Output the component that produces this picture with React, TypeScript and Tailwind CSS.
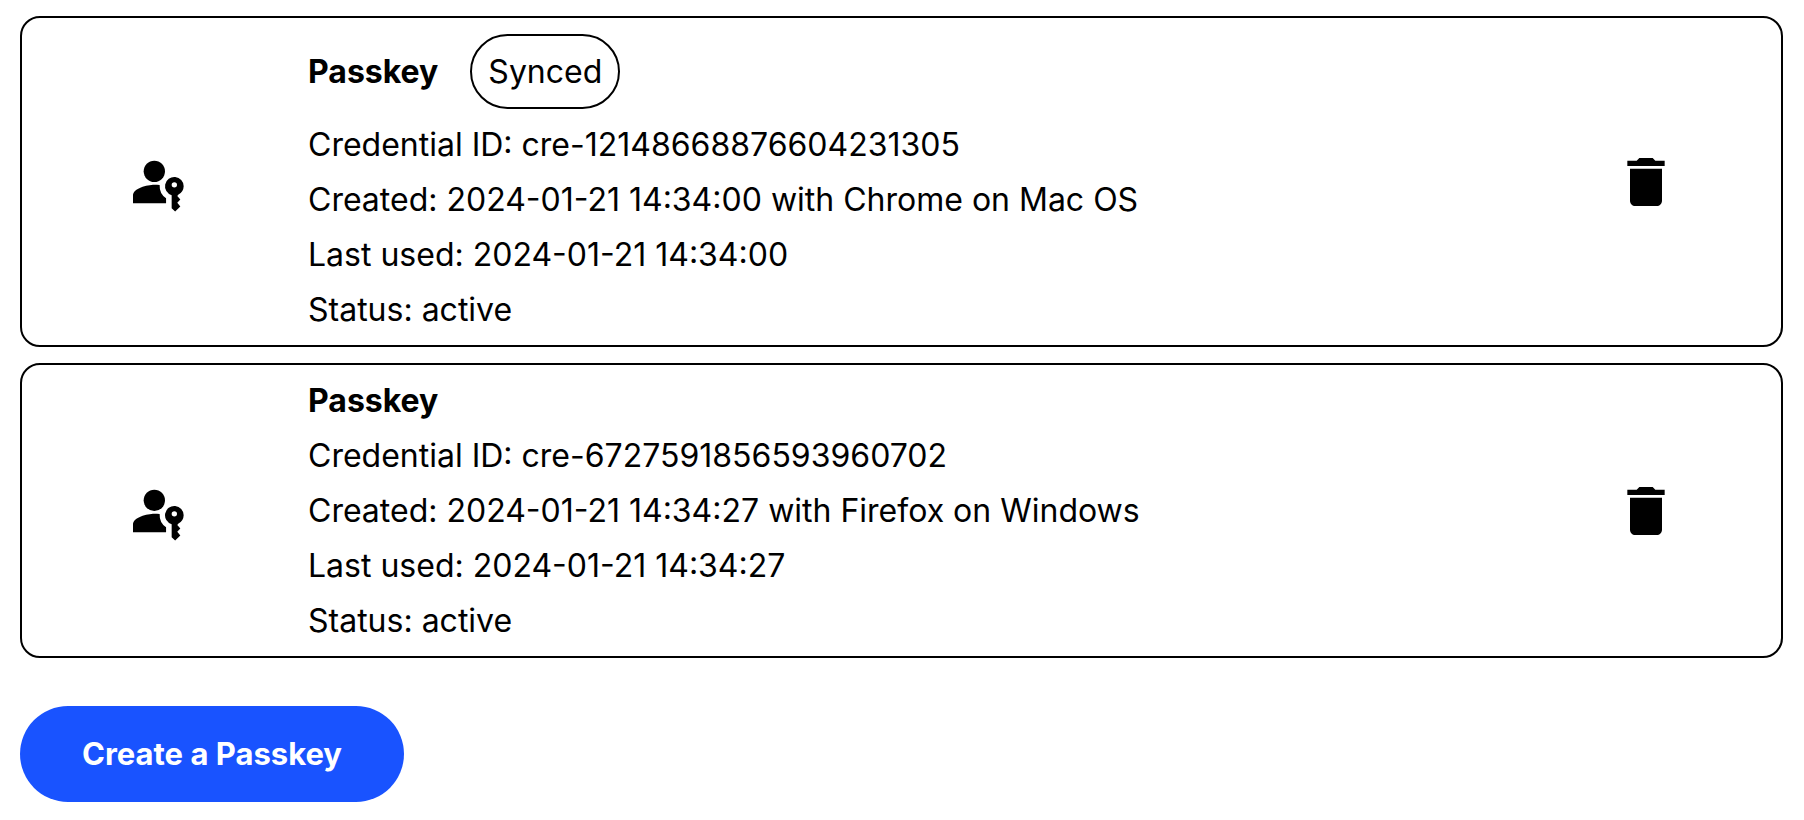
import React from "react";

type Passkey = { id: string; created: string; used: string; synced: boolean };

const passkeys: Passkey[] = [
  { id: "cre-12148668876604231305", created: "2024-01-21 14:34:00 with Chrome on Mac OS", used: "2024-01-21 14:34:00", synced: true },
  { id: "cre-6727591856593960702", created: "2024-01-21 14:34:27 with Firefox on Windows", used: "2024-01-21 14:34:27", synced: false },
];

function PasskeyIcon() {
  return (
    <svg viewBox="0 0 24 24" className="size-16" fill="currentColor" aria-hidden="true">
      <circle cx="11" cy="8" r="4" />
      <path
        fillRule="evenodd"
        d="M22 13.600a3.500 3.500 0 1 0-4.500 3.350v4.850l1.300 1.300 1.950-1.950-1.150-1.350 1.150-1.200-1.150-1.350.450-.600A3.500 3.500 0 0 0 22 13.600zm-3.500.450a1 1 0 1 1 0-2 1 1 0 0 1 0 2z"
      />
      <path d="M13 13.080C12.350 13.020 11.650 13 11 13c-2.670 0-8 1.340-8 4v3h12.400v-1.900A5.800 5.800 0 0 1 13 13.080z" />
    </svg>
  );
}

function TrashIcon() {
  return (
    <svg viewBox="0 0 24 24" className="size-16" fill="currentColor" aria-hidden="true">
      <path d="M6 19c0 1.100.900 2 2 2h8c1.100 0 2-.900 2-2V7H6v12zM19 4h-3.500l-1-1h-5l-1 1H5v2h14V4z" />
    </svg>
  );
}

function PasskeyCard({ item }: { item: Passkey }) {
  return (
    <li className="grid grid-cols-[270px_1fr_270px] items-center rounded-[20px] border-2 border-black py-2">
      <div className="flex justify-center"><PasskeyIcon /></div>
      <div className="pl-4 text-[32px] leading-[55px] [font-optical-sizing:none]">
        <div className="flex items-center gap-8">
          <h2 className="font-bold">Passkey</h2>
          {item.synced && <span className="my-2 rounded-full border-2 border-black px-4 py-2">Synced</span>}
        </div>
        <p>Credential ID: {item.id}</p>
        <p>Created: {item.created}</p>
        <p>Last used: {item.used}</p>
        <p>Status: active</p>
      </div>
      <div className="flex justify-center">
        <button type="button" aria-label="Delete passkey"><TrashIcon /></button>
      </div>
    </li>
  );
}

export default function App() {
  return (
    <main className="bg-white py-4 pr-[21px] pl-5 font-['Inter',sans-serif] text-black">
      <ul className="flex flex-col gap-4">
        {passkeys.map((item) => <PasskeyCard key={item.id} item={item} />)}
      </ul>
      <button type="button" className="mt-12 h-24 w-96 rounded-full bg-[#1953ff] text-[31px] font-bold text-white">
        Create a Passkey
      </button>
    </main>
  );
}
